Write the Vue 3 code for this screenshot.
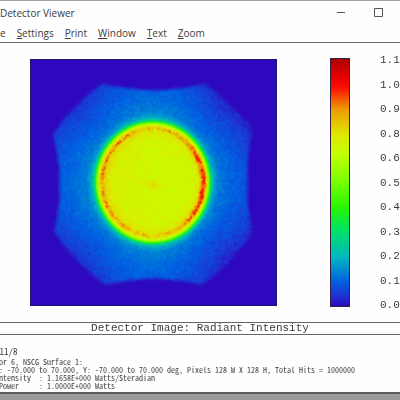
<script setup>
import { onMounted, ref } from 'vue'

const menus = [
  { key: '', rest: 'e' },
  { key: 'S', rest: 'ettings' },
  { key: 'P', rest: 'rint' },
  { key: 'W', rest: 'indow' },
  { key: 'T', rest: 'ext' },
  { key: 'Z', rest: 'oom' },
]

const ticks = ['1.1', '1.0', '0.9', '0.8', '0.6', '0.5', '0.4', '0.3', '0.2', '0.1', '0.0']

const details = [
  'tor 6, NSCG Surface 1:',
  'X: -70.000 to 70.000, Y: -70.000 to 70.000 deg, Pixels 128 W X 128 H, Total Hits = 1000000',
  'Intensity  : 1.1658E+000 Watts/Steradian',
  ' Power     : 1.0000E+000 Watts',
]

// Colour stops of the false-colour scale, from zero to peak
const stops = [
  [0, 46, 8, 190],
  [0.04, 30, 50, 210],
  [0.1, 0, 98, 226],
  [0.2, 0, 185, 190],
  [0.31, 0, 228, 100],
  [0.4, 40, 245, 0],
  [0.51, 125, 255, 0],
  [0.62, 198, 255, 0],
  [0.7, 225, 228, 0],
  [0.8, 240, 150, 0],
  [0.88, 250, 20, 0],
  [0.92, 235, 0, 0],
  [1, 175, 0, 0],
]

const scale = {
  background: `linear-gradient(to top, ${stops
    .map(([p, r, g, b]) => `rgb(${r}, ${g}, ${b}) ${Math.round(p * 100)}%`)
    .join(', ')})`,
}

const SIZE = 128
const map = ref(null)

function colour(value) {
  const v = Math.min(1, Math.max(0, value))
  let i = 1
  while (i < stops.length - 1 && stops[i][0] < v) i++
  const a = stops[i - 1]
  const b = stops[i]
  const t = (v - a[0]) / (b[0] - a[0])
  return [1, 2, 3].map((c) => a[c] + (b[c] - a[c]) * t)
}

function interpolate(points, x) {
  for (let i = 1; i < points.length; i++) {
    if (x <= points[i][0]) {
      const [x0, y0] = points[i - 1]
      const [x1, y1] = points[i]
      return y0 + ((y1 - y0) * (x - x0)) / (x1 - x0)
    }
  }
  return points[points.length - 1][1]
}

// Radial falloff of the beam; 1 is the edge of the bright disc
const falloff = [
  [0, 0.64],
  [0.7, 0.65],
  [0.84, 0.69],
  [0.9, 0.7],
  [0.95, 0.64],
  [0.985, 0.45],
  [1.02, 0.27],
  [1.06, 0.17],
  [1.15, 0.12],
  [1.35, 0.098],
  [1.65, 0.075],
  [2, 0.04],
  [2.4, 0.012],
]

onMounted(() => {
  const ctx = map.value.getContext('2d')
  const image = ctx.createImageData(SIZE, SIZE)
  const halo = new Path2D(
    'M37 12 Q64 18.500 90 12 Q104 21 115 35.500 Q109.500 64 115 89.500 Q104 107 88.500 117 Q64 110.500 38.500 117 Q22 106 11.500 89 Q18 64 11 38.500 Q21 22 37 12Z',
  )
  let seed = 20191
  const random = () => {
    seed = (seed * 1664525 + 1013904223) % 4294967296
    return seed / 4294967296
  }
  const noise = () => random() + random() - 1
  // Share of a small neighbourhood that lies in the halo, which softens its rim
  const coverage = (x, y) => {
    let hits = 0
    for (let j = -1; j <= 1; j++) {
      for (let i = -1; i <= 1; i++) {
        if (ctx.isPointInPath(halo, x + i * 0.8, y + j * 0.8)) hits++
      }
    }
    return hits / 9
  }

  for (let y = 0; y < SIZE; y++) {
    for (let x = 0; x < SIZE; x++) {
      const dx = (x - 63.1) / 30
      const dy = (y - 63.4) / 31.8
      const d = Math.hypot(dx, dy)
      const n = noise()
      const cover = coverage(x, y)
      let v = 0
      if (cover > 0) {
        v = interpolate(falloff, d)
        if (d < 0.95) {
          const angle = Math.atan2(dy, dx)
          const right = Math.exp(-((angle / 0.85) ** 2))
          const left = Math.max(0, -Math.cos(angle))
          const ring = Math.exp(-(((d - 0.88) / (0.03 + right * 0.022)) ** 2))
          const core = Math.exp(-((dx / 0.16) ** 2) - (((dy - 0.03 - dx * 0.2) / 0.06) ** 2))
          const side = Math.min(1, Math.abs(dx) * 2.5)
          v += ring * (0.01 + side * 0.04 + right * 0.14 + left * 0.025)
          v += core * 0.07 + left * d * 0.03
          v += n * (0.035 + ring * 0.07)
        } else if (d > 1.05) {
          const onAxis = Math.abs(dx * dx - dy * dy) / (d * d)
          const outer = Math.min(1, Math.max(0, d - 1.2) * 1.6)
          v += onAxis * 0.016 - (1 - onAxis) * outer * 0.022
          v += n * 0.024 - Math.max(0, dx) * 0.008
          v = Math.max(0.01, v) * cover
        }
      }
      const [r, g, b] = colour(v)
      image.data.set([r, g, b, 255], (y * SIZE + x) * 4)
    }
  }
  ctx.putImageData(image, 0, 0)
})
</script>

<template>
  <main class="window">
    <header class="titlebar">
      <h1>Detector Viewer</h1>
      <div class="controls">
        <button type="button" aria-label="Minimize">
          <svg width="10" height="10" viewBox="0 0 10 10"><path d="M1 4.500H9" /></svg>
        </button>
        <button type="button" aria-label="Maximize">
          <svg width="10" height="10" viewBox="0 0 10 10"><path d="M1.500 0.500H9.500V8.500H1.500Z" /></svg>
        </button>
      </div>
    </header>

    <nav class="menubar">
      <button v-for="menu in menus" :key="menu.rest" type="button"><u>{{ menu.key }}</u>{{ menu.rest }}</button>
    </nav>

    <section class="plot">
      <canvas ref="map" class="map" :width="SIZE" :height="SIZE" role="img" aria-label="Radiant intensity"></canvas>
      <div class="scale" :style="scale"></div>
      <ol class="ticks">
        <li v-for="tick in ticks" :key="tick">{{ tick }}</li>
      </ol>
    </section>

    <h2 class="caption">Detector Image: Radiant Intensity</h2>

    <section class="details">
      <p class="date">/11/8</p>
      <p v-for="line in details" :key="line">{{ line }}</p>
    </section>
  </main>
</template>

<style>
body {
  margin: 0;
  background: #9b9b9b;
}
</style>

<style scoped>
.window {
  overflow: hidden;
  border-top: 1px solid #a5a5a5;
  border-bottom: 2px solid #5c5c5c;
  background: #fefefe;
  color: #3c3c3c;
  font-family: "Open Sans", "Noto Sans", sans-serif;
}

.titlebar {
  display: flex;
  align-items: center;
  justify-content: space-between;
  height: 23px;
  padding-right: 17px;
}

h1 {
  margin: 0;
  font-size: 10px;
  font-weight: 400;
  line-height: 16px;
}

button {
  padding: 0;
  border: 0;
  background: none;
  color: inherit;
  font: inherit;
}

.controls {
  display: flex;
  gap: 27px;
}

.controls button {
  display: flex;
}

svg {
  fill: none;
  stroke: #555;
  stroke-width: 1;
}

.menubar {
  display: flex;
  gap: 11px;
  height: 18px;
  border-bottom: 1px solid #6a6a6a;
  font-size: 10px;
  line-height: 16px;
}

.plot {
  display: flex;
  padding: 16px 0 16px 30px;
}

.map {
  box-sizing: border-box;
  flex: 1 1 0;
  min-width: 0;
  aspect-ratio: 1;
  border: 1px solid #1c1464;
}

.scale {
  box-sizing: border-box;
  flex: none;
  width: 20px;
  margin: -1px 30px -1px 53px;
  border: 1px solid #33203c;
}

.ticks {
  display: flex;
  flex-direction: column;
  justify-content: space-between;
  flex: none;
  width: 20px;
  margin: -5px 0;
  padding: 0;
  list-style: none;
  font: 11px/12px "Liberation Mono", monospace;
}

.caption {
  margin: 0;
  border: solid #666;
  border-width: 1px 0;
  font: 11px/11px "Liberation Mono", monospace;
  text-align: center;
}

.details {
  margin-left: -5px;
  padding: 11px 0 2px;
  font: 8px/8px "Noto Sans Mono CJK SC", "Liberation Mono", monospace;
  white-space: pre;
}

.details p {
  margin: 0;
}

.details .date {
  font-size: 9px;
  line-height: 12px;
}
</style>
